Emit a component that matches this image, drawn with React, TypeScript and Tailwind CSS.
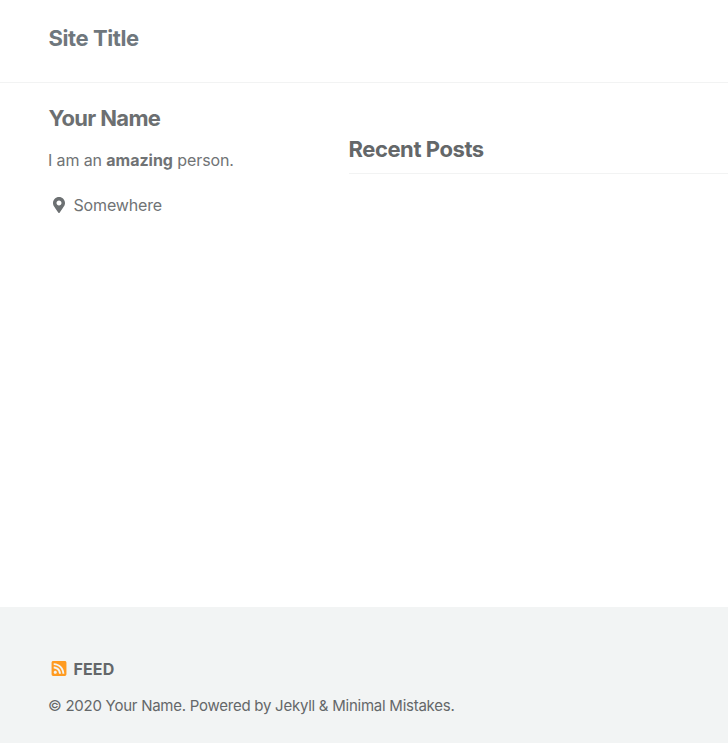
import { FaMapMarkerAlt, FaRssSquare } from "react-icons/fa";

export default function App() {
  return (
    <div className="flex h-[743px] w-full flex-col overflow-hidden bg-white font-['Inter',sans-serif] text-[#6f777d]">
      <header className="h-[83px] border-b border-[#f2f3f3] pt-[22px] pl-12">
        <a className="ml-[0.5px] block text-[22px] leading-8 font-bold tracking-[-0.42px] whitespace-nowrap">Site Title</a>
      </header>
      <main className="flex flex-1 pl-12 text-[#646769]">
        <aside className="w-[300px] shrink-0 pt-[19px]">
          <h3 className="ml-[0.5px] text-[22px] leading-8 font-bold tracking-[-0.67px] text-[#6c6f71]">Your Name</h3>
          <p className="mt-[14px] text-[16px] leading-6 tracking-[-0.12px] text-[#707375]">
            I am an <strong className="font-bold tracking-[-0.01px]">amazing</strong> person.
          </p>
          <p className="mt-[21px] flex items-center text-[16px] leading-6 tracking-[-0.15px] text-[#707375]">
            <FaMapMarkerAlt className="mr-[4.5px] ml-px h-4 w-5 text-[#6c7072]" />
            Somewhere
          </p>
        </aside>
        <section className="ml-px flex-1 pt-[50px]">
          <h3 className="h-[41px] border-b border-[#f2f3f3] text-[22px] leading-8 font-bold tracking-[-0.43px]">
            <span className="-ml-[0.5px]">Recent Posts</span>
          </h3>
        </section>
      </main>
      <footer className="h-[136px] bg-[#f2f4f4] pt-[50px] pl-12 text-[#646769]">
        <a className="flex items-center text-[16px] leading-6 font-bold tracking-[0.1px]">
          <FaRssSquare className="mr-[4.5px] mb-px ml-px h-[17px] w-5 text-[#ff9b21]" />
          FEED
        </a>
        <p className="mt-[13px] text-[15px] leading-6 tracking-[-0.25px] whitespace-nowrap">
          © 2020 Your Name. Powered by Jekyll &amp; Minimal Mistakes.
        </p>
      </footer>
    </div>
  );
}
